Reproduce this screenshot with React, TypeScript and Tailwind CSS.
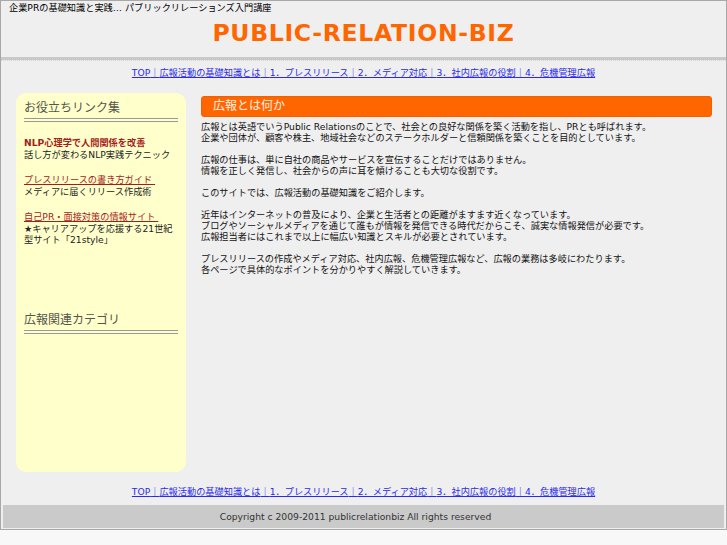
const navItems = [
  "TOP",
  "広報活動の基礎知識とは",
  "1．プレスリリース",
  "2．メディア対応",
  "3．社内広報の役割",
  "4．危機管理広報",
];

function Nav() {
  return (
    <div className="flex justify-center text-[9.2px] leading-[11px]">
      <span className="underline text-[#2a2aee] whitespace-nowrap">
        {navItems.map((item, i) => (
          <span key={item}>
            {i > 0 && "｜"}
            <a href="#" className="text-[#2a2aee]">
              {item}
            </a>
          </span>
        ))}
      </span>
    </div>
  );
}

const paragraphs: string[][] = [
  [
    "広報とは英語でいうPublic Relationsのことで、社会との良好な関係を築く活動を指し、PRとも呼ばれます。",
    "企業や団体が、顧客や株主、地域社会などのステークホルダーと信頼関係を築くことを目的としています。",
  ],
  [
    "広報の仕事は、単に自社の商品やサービスを宣伝することだけではありません。",
    "情報を正しく発信し、社会からの声に耳を傾けることも大切な役割です。",
  ],
  ["このサイトでは、広報活動の基礎知識をご紹介します。"],
  [
    "近年はインターネットの普及により、企業と生活者との距離がますます近くなっています。",
    "ブログやソーシャルメディアを通じて誰もが情報を発信できる時代だからこそ、誠実な情報発信が必要です。",
    "広報担当者にはこれまで以上に幅広い知識とスキルが必要とされています。",
  ],
  [
    "プレスリリースの作成やメディア対応、社内広報、危機管理広報など、広報の業務は多岐にわたります。",
    "各ページで具体的なポイントを分かりやすく解説していきます。",
  ],
];

function SideHeading({ children }: { children: React.ReactNode }) {
  return (
    <h2 className="text-[12px] leading-[15px] text-[#55554d] pb-[2px] border-b-[4px] border-double border-[#999999] font-normal">
      {children}
    </h2>
  );
}

export default function App() {
  return (
    <div className="min-h-[545px] bg-[#f8f8f8] text-black font-['DejaVu_Sans','Noto_Sans_CJK_JP',sans-serif]">
      <div className="border border-[#a8a8a8] bg-[#efefef] pb-[1px]">
        {/* header */}
        <div className="pl-[8px] pt-[1px] text-[9.2px] leading-[11px] text-black">
          企業PRの基礎知識と実践… パブリックリレーションズ入門講座
        </div>
        <h1 className="mt-[6px] text-center text-[23.5px] leading-[28px] font-bold tracking-[0.7px] text-[#ff6600]">
          PUBLIC-RELATION-BIZ
        </h1>
        <div className="mt-[10px] border-b-[3px] border-[#c9c9c9]" />
        <div className="border-b border-dotted border-[#d6d6d6]" />

        <div className="mt-[6px]">
          <Nav />
        </div>

        {/* main row */}
        <div className="mt-[15px] flex items-start pl-[15px] pr-[14px] gap-[15px]">
          {/* sidebar */}
          <aside className="w-[170px] h-[379px] shrink-0 rounded-[10px] bg-[#ffffcc] px-[8px] pt-[8px]">
            <SideHeading>お役立ちリンク集</SideHeading>
            <div className="mt-[15px] text-[9.2px] leading-[11.5px]">
              <div>
                <a href="#" className="font-bold text-[#a51c1c]">
                  NLP心理学で人間関係を改善
                </a>
                <p className="text-[#222]">話し方が変わるNLP実践テクニック</p>
              </div>
              <div className="mt-[14px]">
                <a href="#" className="underline text-[#a51c1c]">
                  プレスリリースの書き方ガイド&nbsp;
                </a>
                <p className="text-[#222]">メディアに届くリリース作成術</p>
              </div>
              <div className="mt-[14px]">
                <a href="#" className="underline text-[#a51c1c]">
                  自己PR・面接対策の情報サイト&nbsp;
                </a>
                <p className="text-[#222]">
                  ★キャリアアップを応援する21世紀型サイト「21style」
                </p>
              </div>
            </div>
            <div className="mt-[67px]">
              <SideHeading>広報関連カテゴリ</SideHeading>
            </div>
          </aside>

          {/* content */}
          <main className="flex-1 min-w-0 mt-[3px]">
            <div className="h-[21px] rounded-[3px] bg-[#ff6600] border border-[#f26100] pl-[11px] flex items-center">
              <h2 className="text-[12px] leading-[15px] text-[#fff0e0] font-normal">
                広報とは何か
              </h2>
            </div>
            <div className="mt-[4px] text-[9.2px] leading-[11px] text-[#111]">
              {paragraphs.map((lines, i) => (
                <p key={i} className="mb-[11px]">
                  {lines.map((l, j) => (
                    <span key={j} className="block">
                      {l}
                    </span>
                  ))}
                </p>
              ))}
            </div>
          </main>
        </div>

        <div className="mt-[14px]">
          <Nav />
        </div>

        {/* footer */}
        <footer className="mx-[2px] mt-[8px] h-[23px] bg-[#cacaca] flex items-center justify-center pr-[16px] text-[9.2px] leading-[11px] text-[#333]">
          Copyright c 2009-2011 publicrelationbiz All rights reserved
        </footer>
      </div>
    </div>
  );
}
